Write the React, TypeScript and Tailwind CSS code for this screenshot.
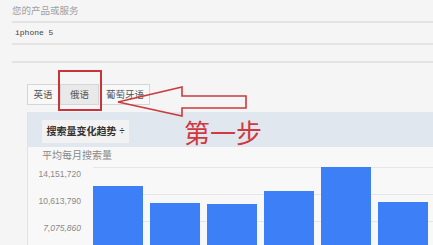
import React from "react";

const bars = [74, 57, 56, 69, 93, 58];

export default function App() {
  return (
    <div
      className="relative w-[433px] h-[245px] overflow-hidden bg-[#f5f5f5] text-[#777]"
      style={{ fontFamily: '"Liberation Sans", "Noto Sans CJK SC", sans-serif' }}
    >
      {/* form area */}
      <div className="pl-[12px]">
        <div className="h-[21px] pt-[4px] text-[9.5px] leading-[14px] text-[#a0a0a0]">您的产品或服务</div>
        <div className="h-[2px] bg-[#e3e3e3]" />
        <div className="h-[20px] pl-[3px] pt-[3px] text-[8px] leading-[14px] text-[#444]" style={{ fontFamily: '"Liberation Mono", monospace' }}>
          iphone 5
        </div>
        <div className="h-[2px] bg-[#e3e3e3]" />
        <div className="h-[16px]" />
        <div className="h-[2px] bg-[#e3e3e3]" />
      </div>

      {/* tabs */}
      <div className="mt-[21px] ml-[27px] flex h-[21px] text-[9.5px] leading-[19px] text-[#555]">
        <div className="w-[32px] border border-[#d6d6d6] bg-[#f8f8f8] text-center">英语</div>
        <div className="ml-[1px] w-[39px] border border-[#d6d6d6] bg-[#e9e9e9] text-center">俄语</div>
        <div className="ml-[1px] w-[50px] border border-[#d6d6d6] bg-[#f8f8f8] text-center">葡萄牙语</div>
      </div>

      {/* panel */}
      <div className="mt-[7px] ml-[27px] border-l border-[#e2e2e2] bg-[#f8f8f8]">
        <div className="h-[35px] bg-[#e1e7ee] pl-[14px] pt-[8px]">
          <div className="flex h-[23px] w-[87px] items-center justify-center bg-[#f2f2f2] text-[10px] font-bold text-[#333]">
            搜索量变化趋势 <span className="ml-[3px] text-[9px]">÷</span>
          </div>
        </div>
        <div className="pl-[14px] pt-[2px] h-[17px] text-[10px] leading-[14px] text-[#888]">平均每月搜索量</div>
        <div className="relative flex h-[96px]">
          <div className="w-[53px] shrink-0 text-right text-[8.5px] text-[#8a8a8a]">
            <div className="h-[27px] pt-[5px] leading-[10px]">14,151,720</div>
            <div className="h-[27px] pt-[5px] leading-[10px]">10,613,790</div>
            <div className="h-[27px] pt-[5px] leading-[10px] italic">7,075,860</div>
          </div>
          <div className="relative ml-[12px] flex flex-1 items-end gap-[7px] overflow-hidden">
            <div className="absolute left-[-10px] right-0 top-[3px] h-px bg-[#e6e6e6]" />
            <div className="absolute left-[-10px] right-0 top-[30px] h-px bg-[#e6e6e6]" />
            <div className="absolute left-[-10px] right-0 top-[57px] h-px bg-[#e6e6e6]" />
            {bars.map((h, i) => (
              <div key={i} className="relative w-[50px] shrink-0 bg-[#3d7ff7]" style={{ height: h }} />
            ))}
          </div>
        </div>
      </div>

      {/* annotations */}
      <div className="absolute left-[58px] top-[70px] h-[41px] w-[44px] border-2 border-[#c8343a]" />
      <svg className="absolute left-0 top-0" width="433" height="245">
        <polygon
          points="118,102 182,87 182,96 246,96 246,108 182,108 182,116"
          fill="none"
          stroke="#cc3a3e"
          strokeWidth="1.6"
          strokeLinejoin="miter"
        />
      </svg>
      <div
        className="absolute left-[184px] top-[116px] text-[26px] leading-[32px] text-[#d0393d]"
        style={{ fontFamily: '"Noto Sans CJK SC", serif' }}
      >
        第一步
      </div>
    </div>
  );
}
